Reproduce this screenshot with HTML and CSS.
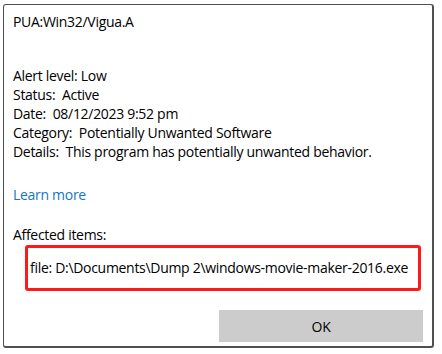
FILE: index.html
```html
<!DOCTYPE html>
<html>
<head>
<meta charset="utf-8">
<link rel="stylesheet" href="styles.css">
</head>
<body>
<div class="dialog">
  <div class="title">PUA:Win32/Vigua.A</div>
  <div class="info">
    <div>Alert level: Low</div>
    <div>Status:&nbsp; Active</div>
    <div>Date:&nbsp; 08/12/2023 9:52 pm</div>
    <div>Category:&nbsp; Potentially Unwanted Software</div>
    <div>Details:&nbsp; This program has potentially unwanted behavior.</div>
  </div>
  <a class="learn" href="#">Learn more</a>
  <div class="affected">Affected items:</div>
  <div class="item">file: D:\Documents\Dump 2\windows-movie-maker-2016.exe</div>
  <button class="ok">OK</button>
</div>
</body>
</html>
```
FILE: styles.css
```css
html, body {
  margin: 0;
  padding: 0;
  background: #fff;
}
body {
  font-family: "Open Sans", "Noto Sans", sans-serif;
  font-size: 14px;
  letter-spacing: -0.3px;
  color: #000;
}
.dialog {
  box-sizing: border-box;
  margin: 4px 0 0 3px;
  width: 431px;
  height: 344px;
  border: 1px solid #505050;
  border-right-width: 2px;
  border-bottom-width: 2px;
  border-radius: 3px;
  padding: 7px 9px 0 9px;
  display: flex;
  flex-direction: column;
  line-height: 20px;
}
.title {
  line-height: 20px;
}
.info {
  margin-top: 34px;
  line-height: 19px;
}
.learn {
  margin-top: 24px;
  color: #1277c3;
  text-decoration: none;
  align-self: flex-start;
}
.affected {
  margin-top: 20px;
}
.item {
  box-sizing: border-box;
  margin-left: 12px;
  width: 396px;
  height: 46px;
  border: 3px solid #ff1a1a;
  border-radius: 3px;
  padding-left: 2px;
  display: flex;
  align-items: center;
  white-space: nowrap;
}
.ok {
  align-self: flex-end;
  margin-top: 19px;
  width: 204px;
  height: 32px;
  border: none;
  background: #cccccc;
  font-family: inherit;
  font-size: 14px;
  letter-spacing: inherit;
  color: #000;
  padding: 0;
}
```
